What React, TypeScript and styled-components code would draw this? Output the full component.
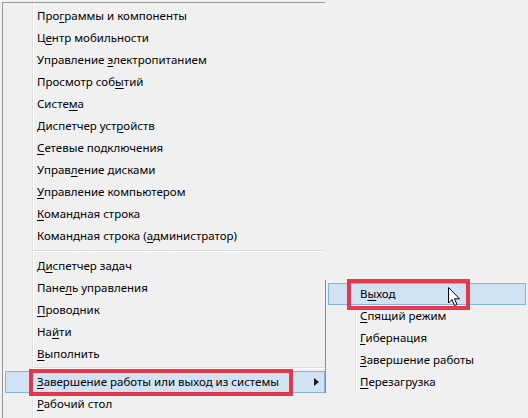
import React from 'react'
import styled, { createGlobalStyle } from 'styled-components'

type Item = { label: string; key: number; submenu?: boolean; highlight?: boolean; marked?: boolean }
type Entry = Item | { sep: number }

const mainItems: Entry[] = [
  { label: 'Программы и компоненты', key: 3 },
  { label: 'Центр мобильности', key: 1 },
  { label: 'Управление электропитанием', key: 11 },
  { label: 'Просмотр событий', key: 12 },
  { label: 'Система', key: 5 },
  { label: 'Диспетчер устройств', key: 13 },
  { label: 'Сетевые подключения', key: 0 },
  { label: 'Управление дисками', key: 5 },
  { label: 'Управление компьютером', key: 0 },
  { label: 'Командная строка', key: 0 },
  { label: 'Командная строка (администратор)', key: 18 },
  { sep: 8 },
  { label: 'Диспетчер задач', key: 1 },
  { label: 'Панель управления', key: 4 },
  { label: 'Проводник', key: 0 },
  { label: 'Найти', key: 2 },
  { label: 'Выполнить', key: 0 },
  { sep: 6 },
  { label: 'Завершение работы или выход из системы', key: 0, submenu: true, highlight: true, marked: true },
  { label: 'Рабочий стол', key: 0 }
]

const subItems: Item[] = [
  { label: 'Выход', key: 1, highlight: true, marked: true },
  { label: 'Спящий режим', key: 0 },
  { label: 'Гибернация', key: 0 },
  { label: 'Завершение работы', key: 0 },
  { label: 'Перезагрузка', key: 0 }
]

const GlobalStyle = createGlobalStyle`
  html, body {
    margin: 0;
    padding: 0;
    background: #f0f0f0;
  }
  body {
    font-family: "Noto Sans", "Open Sans", sans-serif;
    font-size: 11.5px;
    color: #000;
  }
`

const Screen = styled.div`
  position: relative;
  width: 528px;
  height: 418px;
  overflow: hidden;
  background: #f0f0f0;
`

// icon column line shared by both menus
const iconColumn = `
  background: linear-gradient(
    to right,
    transparent 29px,
    #e2e3e3 29px,
    #e2e3e3 30px,
    #ffffff 30px,
    #ffffff 31px,
    transparent 31px
  );
`

const MainMenu = styled.div`
  margin: 2px 0 0 2px;
  width: 323px;
  padding-top: 2px;
  border-top: 1px solid #9a9a9a;
  border-left: 1px solid #979797;
  height: 420px;
  box-sizing: border-box;
  ${iconColumn}
`

const SubMenu = styled.div`
  position: absolute;
  left: 325px;
  top: 280px;
  width: 201px;
  height: 113px;
  padding-top: 3px;
  box-sizing: border-box;
  border-left: 1px solid #8c8c8c;
  ${iconColumn}
`

const Row = styled.div<{ $active?: boolean }>`
  position: relative;
  display: flex;
  align-items: center;
  height: 22px;
  margin-left: 2px;
  padding-left: 31px;
  box-sizing: border-box;
  border: 1px solid ${p => (p.$active ? '#80b3e8' : 'transparent')};
  background: ${p => (p.$active ? '#d1e2f3' : 'transparent')};
  white-space: nowrap;
  line-height: 20px;
`

const Separator = styled.div<{ $h: number }>`
  height: ${p => p.$h}px;
  margin-left: 29px;
  display: flex;
  flex-direction: column;
  justify-content: center;

  &::before {
    content: '';
    display: block;
    height: 1px;
    background: #dcdcdc;
  }
  &::after {
    content: '';
    display: block;
    height: 1px;
    background: #ffffff;
  }
`

const Key = styled.span`
  text-decoration: underline;
  text-underline-offset: 2px;
`

const Arrow = styled.svg`
  position: absolute;
  right: 5px;
  top: 6px;
`

const Mark = styled.div<{ $l: number; $t: number; $w: number; $h: number }>`
  position: absolute;
  left: ${p => p.$l}px;
  top: ${p => p.$t}px;
  width: ${p => p.$w}px;
  height: ${p => p.$h}px;
  box-sizing: border-box;
  border: 4px solid rgba(230, 40, 62, 0.92);
  pointer-events: none;
`

const Cursor = styled.svg`
  position: absolute;
  left: 448px;
  top: 287px;
`

const Label = ({ item }: { item: Item }) => {
  const t = item.label
  return (
    <span>
      {t.slice(0, item.key)}
      <Key>{t[item.key]}</Key>
      {t.slice(item.key + 1)}
    </span>
  )
}

function App() {
  return (
    <Screen>
      <GlobalStyle />
      <MainMenu>
        {mainItems.map((e, i) =>
          'sep' in e ? (
            <Separator key={i} $h={e.sep} />
          ) : (
            <Row key={i} $active={e.highlight}>
              <Label item={e} />
              {e.submenu && (
                <Arrow width="5" height="8" viewBox="0 0 5 8">
                  <polygon points="0,0 5,4 0,8" fill="#1a1a1a" />
                </Arrow>
              )}
              {e.marked && <Mark $l={23} $t={-3} $w={264} $h={27} />}
            </Row>
          )
        )}
      </MainMenu>
      <SubMenu>
        {subItems.map((e, i) => (
          <Row key={i} $active={e.highlight}>
            <Label item={e} />
            {e.marked && <Mark $l={18} $t={-5} $w={123} $h={31} />}
          </Row>
        ))}
      </SubMenu>
      <Cursor width="13" height="20" viewBox="0 0 13 20">
        <path
          d="M0.5 0.5 L0.5 16 L4 12.5 L6.5 18.5 L9 17.5 L6.5 11.8 L11.5 11.8 Z"
          fill="#fff"
          stroke="#000"
          strokeWidth="1"
        />
      </Cursor>
    </Screen>
  )
}

export default App
